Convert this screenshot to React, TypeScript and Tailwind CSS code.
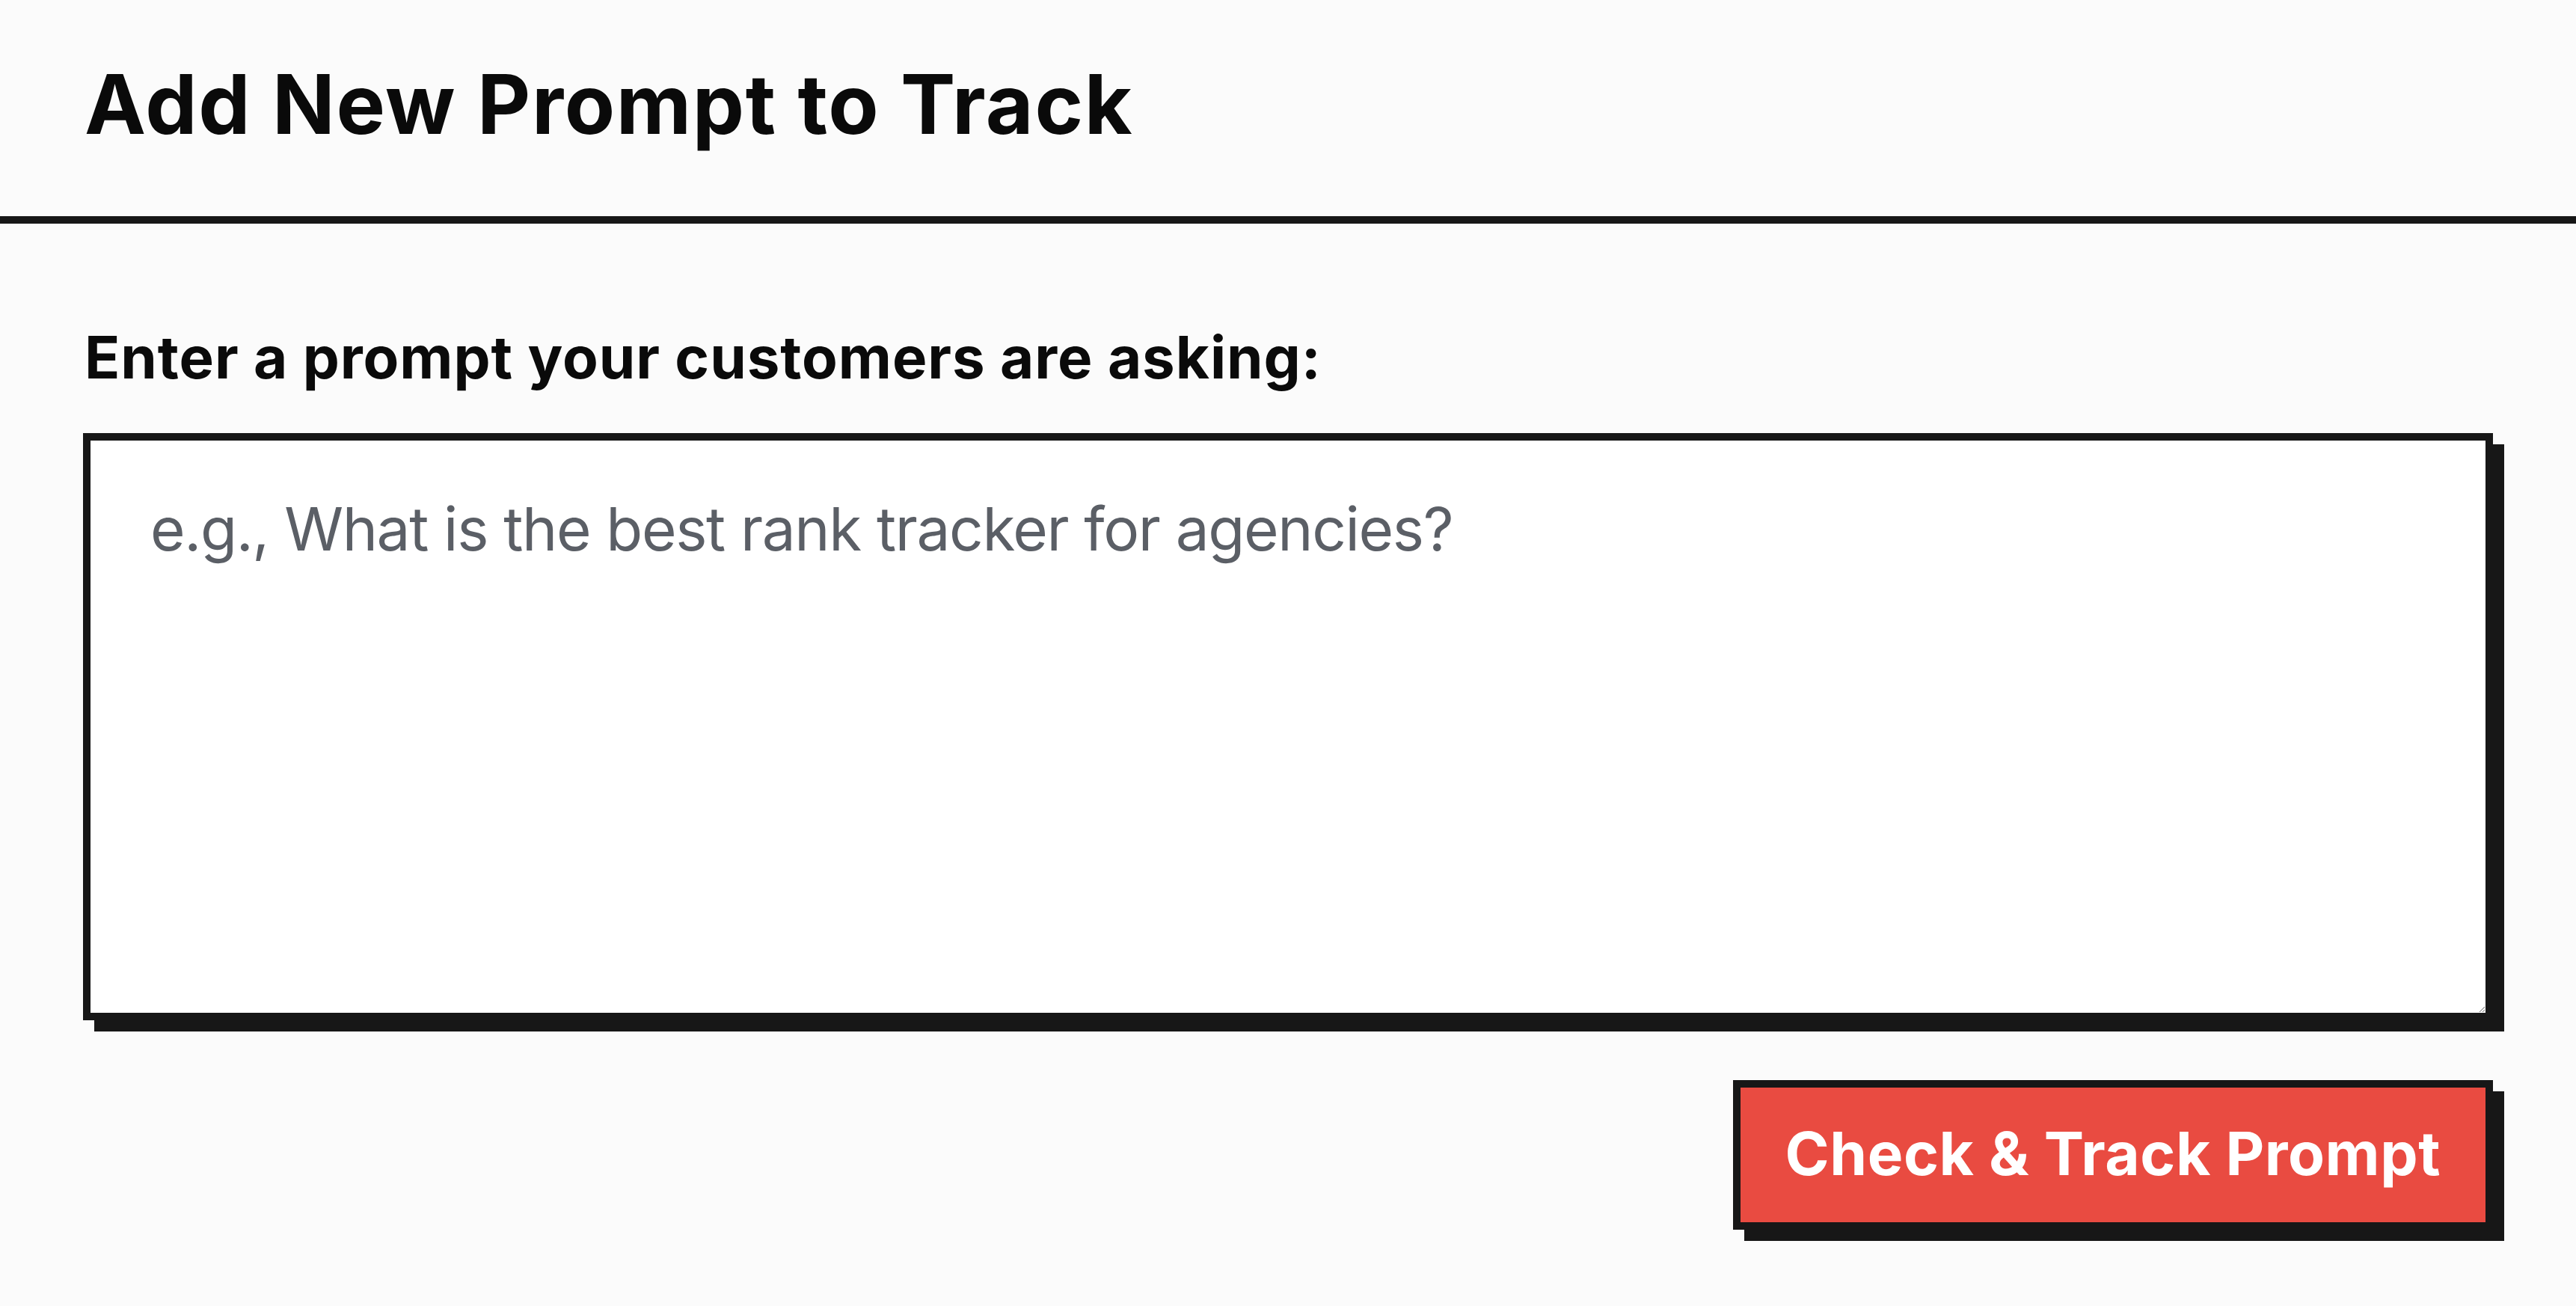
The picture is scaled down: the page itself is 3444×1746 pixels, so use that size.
import React from "react";

export default function App() {
  return (
    <div
      className="min-h-screen w-full bg-[#fbfbfb] text-[#0a0a0a]"
      style={{ fontFamily: "Inter, 'Noto Sans', sans-serif" }}
    >
      <div className="border-b-[10px] border-[#171717] px-[113px] pt-[84px] pb-[95px]">
        <h1 className="text-[110px] font-bold leading-none tracking-[0.015em]">
          Add New Prompt to Track
        </h1>
      </div>
      <div className="px-[111px] pt-[140px] pb-[80px]">
        <label className="block pl-[2px] text-[78px] font-bold leading-none tracking-[0.012em]">
          Enter a prompt your customers are asking:
        </label>
        <div className="mt-[62px]">
          <textarea
            className="block h-[785px] w-full resize-y border-[10px] border-[#171717] bg-white px-[80px] pt-[70px] text-[80px] leading-[1.2] tracking-[-0.017em] text-[#0a0a0a] shadow-[15px_15px_0_0_#171717] outline-none placeholder:text-[#5b5f66]"
            placeholder="e.g., What is the best rank tracker for agencies?"
          />
        </div>
        <div className="mt-[80px] flex justify-end">
          <button className="border-[10px] border-[#171717] bg-[#e94b41] px-[60px] pt-[48px] pb-[52px] text-[80px] font-bold leading-none tracking-[0.007em] text-white shadow-[15px_15px_0_0_#171717]">
            Check &amp; Track Prompt
          </button>
        </div>
      </div>
    </div>
  );
}
